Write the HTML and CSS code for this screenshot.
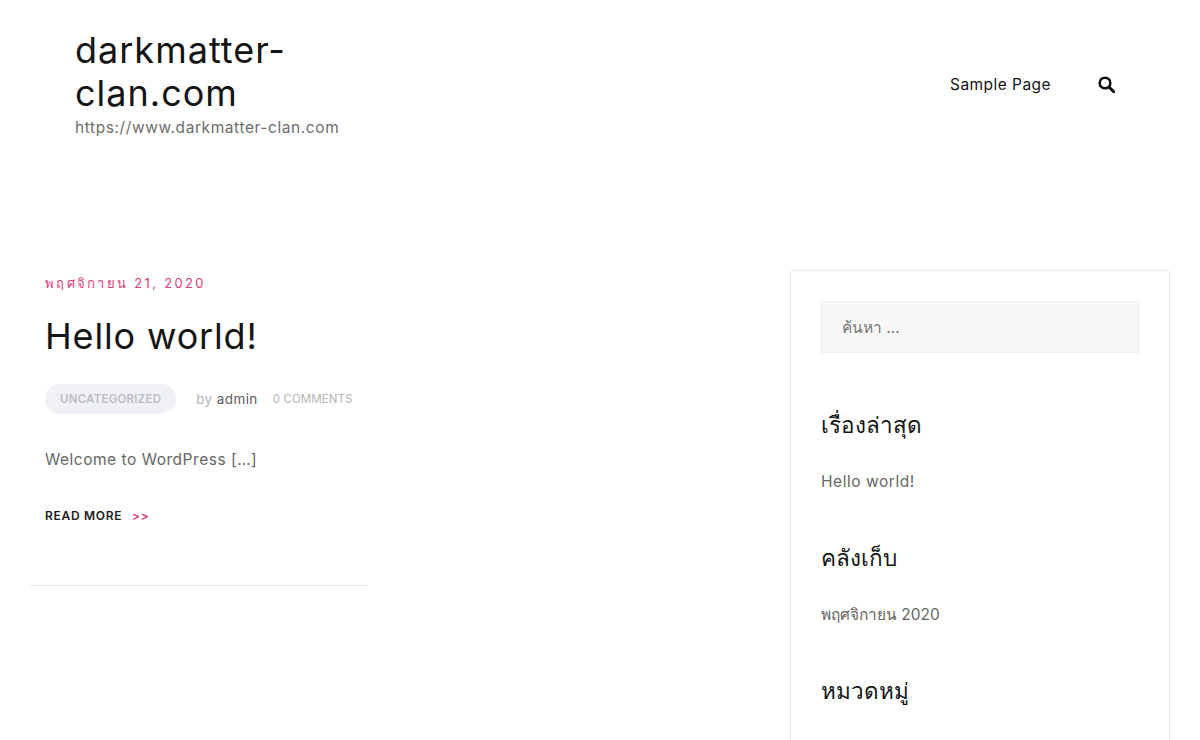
FILE: index.html
```html
<!DOCTYPE html>
<html lang="th">
<head>
  <meta charset="UTF-8" />
  <meta name="viewport" content="width=device-width, initial-scale=1.0"/>
  <title>darkmatter-clan.com</title>
  <link rel="stylesheet" href="styles.css">
</head>
<body>
  <header class="site-header">
    <div class="branding">
      <a class="site-title" href="#">darkmatter-clan.com</a>
      <p class="site-tagline">https://www.darkmatter-clan.com</p>
    </div>
    <nav class="main-nav">
      <a href="#">Sample Page</a>
      <button class="search-toggle" aria-label="Search">
        <svg width="17" height="17" viewBox="0 0 17 17"><circle cx="7" cy="7" r="5.3" fill="none" stroke="#111" stroke-width="2.6"/><path d="M11 11l4.6 4.6" stroke="#111" stroke-width="3" stroke-linecap="round"/></svg>
      </button>
    </nav>
  </header>

  <div class="content">
    <main class="posts">
      <article class="post">
        <div class="post-date">พฤศจิกายน 21, 2020</div>
        <h2 class="post-title"><a href="#">Hello world!</a></h2>
        <div class="post-meta">
          <a class="cat-pill" href="#">Uncategorized</a>
          <span class="author">by <a href="#">admin</a></span>
          <a class="comments" href="#">0 Comments</a>
        </div>
        <p class="excerpt">Welcome to WordPress [&hellip;]</p>
        <a class="read-more" href="#">Read More <span>&gt;&gt;</span></a>
      </article>
    </main>

    <aside class="sidebar">
      <input class="search-field" type="search" placeholder="ค้นหา &hellip;">
      <section class="widget">
        <h3>เรื่องล่าสุด</h3>
        <a class="latin" href="#">Hello world!</a>
      </section>
      <section class="widget">
        <h3>คลังเก็บ</h3>
        <a href="#">พฤศจิกายน 2020</a>
      </section>
      <section class="widget">
        <h3>หมวดหมู่</h3>
      </section>
    </aside>
  </div>
</body>
</html>
```

FILE: styles.css
```css
* {
  box-sizing: border-box;
}
body {
  margin: 0;
  background: #fff;
  color: #666;
  font-family: Inter, "Noto Sans", sans-serif;
  font-size: 15.5px;
}
a {
  color: inherit;
  text-decoration: none;
}
.site-header {
  display: flex;
  justify-content: space-between;
  align-items: flex-start;
  padding: 29px 85px 0 75px;
  height: 270px;
}
.branding {
  width: 290px;
}
.site-title {
  display: block;
  font-size: 36px;
  font-weight: 440;
  line-height: 43px;
  letter-spacing: 1px;
  color: #141414;
}
.site-tagline {
  margin: 1px 0 0;
  font-size: 15.5px;
  line-height: 24px;
  letter-spacing: 0.58px;
  color: #6d6d6d;
  white-space: nowrap;
}
.main-nav {
  display: flex;
  align-items: center;
  gap: 47px;
  margin-top: 46px;
  color: #141414;
  font-size: 15.5px;
  line-height: 20px;
  letter-spacing: 0.45px;
}
.search-toggle {
  display: flex;
  margin-top: -1px;
  padding: 0;
  border: 0;
  background: none;
}
.content {
  display: flex;
  justify-content: space-between;
  padding: 0 30px;
}
.posts {
  width: 338px;
}
.post {
  padding: 4px 15px 60px;
  border-bottom: 1px solid #e8e8e8;
}
.post-date {
  color: #de3c77;
  font-size: 13px;
  line-height: 18px;
  letter-spacing: 2.3px;
}
.post-title {
  margin: 23px 0 0;
  font-size: 36px;
  font-weight: 440;
  line-height: 42px;
  letter-spacing: 0.85px;
  color: #141414;
}
.post-meta {
  display: flex;
  align-items: center;
  gap: 20px;
  margin-top: 27px;
  white-space: nowrap;
}
.cat-pill {
  padding: 0 15px;
  border-radius: 15px;
  background: #f0f1f5;
  color: #bdbdc4;
  font-size: 11.5px;
  font-weight: 600;
  line-height: 30px;
  letter-spacing: 0.23px;
  text-transform: uppercase;
}
.author {
  color: #b5b5b5;
  font-size: 13.5px;
  letter-spacing: 0.4px;
}
.author a {
  color: #5c5c5c;
}
.comments {
  margin-left: -5px;
  color: #b5b5b5;
  font-size: 11.5px;
  letter-spacing: 0.1px;
  text-transform: uppercase;
}
.excerpt {
  margin: 35px 0 0;
  line-height: 22px;
  letter-spacing: 0.52px;
}
.read-more {
  display: block;
  margin-top: 36px;
  color: #1c1c1c;
  font-size: 12px;
  font-weight: 600;
  line-height: 18px;
  letter-spacing: 0.7px;
  text-transform: uppercase;
}
.read-more span {
  margin-left: 6px;
  color: #de3c77;
}
.sidebar {
  width: 380px;
  padding: 30px;
  border: 1px solid #eaeaea;
  border-radius: 3px;
}
.search-field {
  display: block;
  width: 100%;
  height: 52px;
  margin-bottom: 55px;
  padding: 0 20px;
  border: 1px solid #eeeeee;
  background: #f7f7f7;
  font: inherit;
}
.search-field::placeholder {
  color: #777;
}
.widget {
  margin-top: 47px;
  line-height: 24px;
}
.widget h3 {
  margin: 0 0 28px;
  color: #141414;
  font-size: 22.5px;
  font-weight: 400;
  line-height: 34px;
}
.latin {
  letter-spacing: 0.55px;
}
```
